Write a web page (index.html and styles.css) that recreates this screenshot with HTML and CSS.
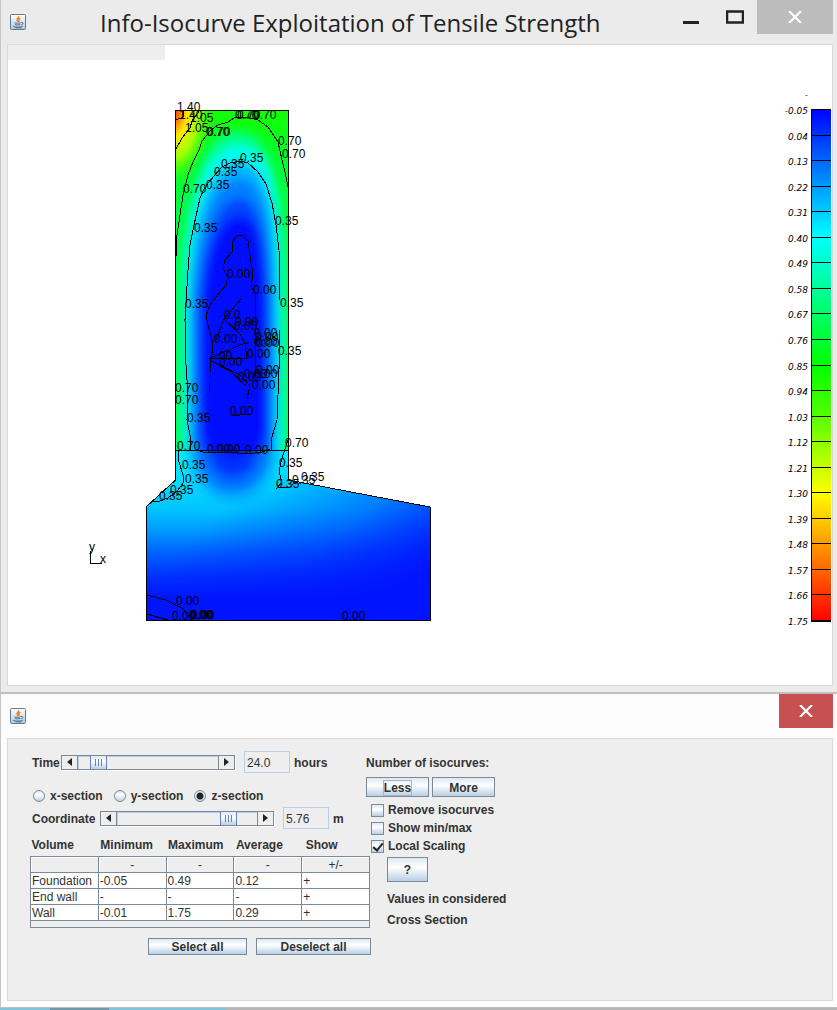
FILE: index.html
```html
<!DOCTYPE html>
<html lang="en">

<head>
    <meta charset="UTF-8">
    <meta name="viewport" content="width=device-width, initial-scale=1.0">
    <title>Info-Isocurve Exploitation of Tensile Strength</title>
    <link rel="stylesheet" href="styles.css">
</head>

<body>
    <svg class="defs" width="0" height="0" aria-hidden="true">
        <defs>
            <linearGradient id="cup-bg" x1="0" y1="0" x2="0" y2="1">
                <stop offset="0" stop-color="#fff" />
                <stop offset="1" stop-color="#b4c8d8" />
            </linearGradient>
            <symbol id="java" viewBox="0 0 16 16">
                <rect x="0.5" y="0.5" width="15" height="15" rx="1" fill="url(#cup-bg)" stroke="#64798a" />
                <path d="M8.6 2.2c.8 1.7-2.500 2.300-1.500 4.200.3.600.7.900.7 1.500M10.300 4.200c-1.800.7-2 1.500-1.300 2.300.4.500.1 1-.4 1.400" fill="none" stroke="#ee7d1d" stroke-width="1.400" />
                <path d="M4.500 8.800c1.500.6 4.800.6 6.200 0M5 10.500c1.300.5 3.800.5 5.200 0M3.200 12.300c2 1.100 7.400 1.100 9.400 0M5.500 13.800h6M11 8.600c2.800-.5 2.600 1.800.2 2.300" fill="none" stroke="#46708f" stroke-width="1" />
            </symbol>
        </defs>
    </svg>

    <!-- Plot window -->
    <section class="window plot-window">
        <header class="titlebar">
            <svg class="app-icon"><use href="#java" /></svg>
            <h1>Info-Isocurve Exploitation of Tensile Strength</h1>
            <div class="window-buttons">
                <button class="win-btn" aria-label="Minimize"><svg width="18" height="14"><path d="M1 12.500h16" stroke="#222" stroke-width="3" /></svg></button>
                <button class="win-btn" aria-label="Maximize"><svg width="18" height="14"><path d="M1 1.500h16v11H1z" fill="none" stroke="#222" stroke-width="2.500" /></svg></button>
                <button class="win-btn close inactive" aria-label="Close"><svg width="14" height="12"><path d="M1 0l12 12M13 0L1 12" stroke="#fff" stroke-width="2.200" /></svg></button>
            </div>
        </header>
        <main class="canvas">
            <div class="menu-strip"></div>
            <div class="plot">
                <svg class="section" width="440" height="625" viewBox="8 60 440 625">
                    <defs>
                        <linearGradient id="wall" x1="0" y1="0" x2="0" y2="1">
                            <stop offset="0" stop-color="#14ff00" />
                            <stop offset="0.150" stop-color="#00ff30" />
                            <stop offset="0.500" stop-color="#00ff50" />
                            <stop offset="1" stop-color="#00ff60" />
                        </linearGradient>
                        <radialGradient id="corner" gradientUnits="userSpaceOnUse" cx="0" cy="0" r="1" gradientTransform="translate(174 112) scale(40 75)">
                            <stop offset="0" stop-color="#ff3000" />
                            <stop offset="0.150" stop-color="#ff8000" />
                            <stop offset="0.320" stop-color="#ffe800" />
                            <stop offset="0.600" stop-color="#a0ff00" />
                            <stop offset="1" stop-color="#20ff00" stop-opacity="0" />
                        </radialGradient>
                        <linearGradient id="base" x1="0" y1="0" x2="0" y2="1">
                            <stop offset="0" stop-color="#00f0ff" />
                            <stop offset="0.200" stop-color="#00dcff" />
                            <stop offset="0.350" stop-color="#00c4ff" />
                            <stop offset="0.470" stop-color="#009cff" />
                            <stop offset="0.600" stop-color="#0064ff" />
                            <stop offset="0.750" stop-color="#0030ff" />
                            <stop offset="0.880" stop-color="#0014ff" />
                            <stop offset="1" stop-color="#0014ff" />
                        </linearGradient>
                        <linearGradient id="base-right" gradientUnits="userSpaceOnUse" x1="270" y1="470" x2="390" y2="610">
                            <stop offset="0" stop-color="#0014ff" stop-opacity="0" />
                            <stop offset="0.500" stop-color="#0014ff" stop-opacity="0.400" />
                            <stop offset="1" stop-color="#0014ff" />
                        </linearGradient>
                        <radialGradient id="joint" gradientUnits="userSpaceOnUse" cx="0" cy="0" r="1" gradientTransform="translate(233 448) scale(54 64)">
                            <stop offset="0" stop-color="#0014ff" />
                            <stop offset="0.350" stop-color="#0038ff" />
                            <stop offset="0.650" stop-color="#0078ff" stop-opacity="0.850" />
                            <stop offset="1" stop-color="#00c0ff" stop-opacity="0" />
                        </radialGradient>
                        <filter id="soft" x="-30%" y="-30%" width="160%" height="160%">
                            <feGaussianBlur stdDeviation="5" />
                        </filter>
                        <clipPath id="wall-clip"><path d="M176 110H288V450H176z" /></clipPath>
                    </defs>

                    <path d="M176 450H288V480L430 507V620H146V507L176 480z" fill="url(#base)" />
                    <path d="M176 450H288V480L430 507V620H146V507L176 480z" fill="url(#base-right)" />
                    <path d="M176 450H288V520H176z" fill="url(#joint)" />
                    <g clip-path="url(#wall-clip)">
                        <path d="M176 110H288V450H176z" fill="url(#wall)" />
                        <path d="M176 110H250V240H176z" fill="url(#corner)" />
                        <g filter="url(#soft)">
                            <path d="M182 480V290C183 210 198 132 238 132S283 210 284 290V480z" fill="#00ff90" />
                            <path d="M184 480V300C185 220 200 146 239 146S281 220 282 300V480z" fill="#00fff0" />
                            <path d="M188 480V310C189 235 204 162 239 162S277 235 278 310V480z" fill="#00b4ff" />
                            <path d="M192 480V315C193 250 208 178 239 178S272 250 273 315V480z" fill="#0080ff" />
                            <path d="M197 440V320C198 260 213 198 239 198S269 260 270 320V440L258 480H208z" fill="#0044ff" />
                            <path d="M201 430V315C203 270 215 216 240 216S265 270 266 315V430L252 480H214z" fill="#0010ff" />
                        </g>
                    </g>

                    <g class="curves">
                        <path d="M175.500 110.500H288V480L430 507V620H146V507L175.500 480zM176 450H288" />
                        <path d="M176 120L183 117V111M176 149L182 138L190 128L192 121L200 110" />
                        <path d="M176 256L177 235L180 215L183 195L188 175L193 162L199 150L202 141L210 131L218 125L228 122L234 118L245 117L258 120L268 127L278 142L282 160L285 172L288 187" />
                        <path d="M191 450L190 435L187 420L188 395L186 365L185 320L188 270L190 245L194 225L200 198L205 187L214 176L222 167L230 163L240 161L248 163L258 172L266 184L272 203L276 225L279 250L280 300V330L279 370L277 420L272 437L271 450" />
                        <path d="M255 380V292L251 287L253 275L250 255L248 241L242 235L237 236L232 242V252L225 260L223 268L228 278L226 285L216 297L210 305L206 315L208 325L212 340L213 352L210 362V372M209 383V391" />
                        <path d="M242 298L224 319L216 340M224 319L240 334L245 343L247 358H210L245 343M210 360L240 375L250 386L247 399M215 363L230 371L246 386M231 416L250 414M249 342L246 344" />
                        <path d="M197 450L206 453L225 452L248 454L262 452L270 449M178 450L179 462L183 475L184 482L178 490L168 498L160 501L152 502M288 440L284 452L281 462L279 472L282 482L277 488L290 487L296 481" />
                        <path d="M147 595L166 600L182 608L190 617M147 614L168 620M90 551V563H102" />
                    </g>

                    <g class="values">
                        <text x="177" y="111">1.40</text>
                        <text x="179" y="119">1.40</text>
                        <text x="190" y="122">1.05</text>
                        <text x="185" y="132">1.05</text>
                        <text x="235" y="119">0.70</text>
                        <text x="237" y="119">0.70</text>
                        <text x="253" y="119">0.70</text>
                        <text x="206" y="136">0.70</text>
                        <text x="207" y="136">0.70</text>
                        <text x="278" y="145">0.70</text>
                        <text x="282" y="158">0.70</text>
                        <text x="240" y="162">0.35</text>
                        <text x="221" y="168">0.35</text>
                        <text x="214" y="176">0.35</text>
                        <text x="206" y="189">0.35</text>
                        <text x="183" y="193">0.70</text>
                        <text x="275" y="225">0.35</text>
                        <text x="194" y="232">0.35</text>
                        <text x="227" y="278">0.00</text>
                        <text x="253" y="294">0.00</text>
                        <text x="185" y="308">0.35</text>
                        <text x="280" y="307">0.35</text>
                        <text x="224" y="319">0.0</text>
                        <text x="235" y="326">0.00</text>
                        <text x="234" y="330">0.00</text>
                        <text x="254" y="337">0.00</text>
                        <text x="255" y="341">0.00</text>
                        <text x="254" y="346">0.00</text>
                        <text x="256" y="347">0.00</text>
                        <text x="214" y="343">0.00</text>
                        <text x="247" y="358">0.00</text>
                        <text x="278" y="355">0.35</text>
                        <text x="219" y="360">00</text>
                        <text x="219" y="366">0.00</text>
                        <text x="256" y="374">0.00</text>
                        <text x="254" y="378">0.00</text>
                        <text x="238" y="381">0.00</text>
                        <text x="244" y="378">0.00</text>
                        <text x="252" y="389">0.00</text>
                        <text x="175" y="392">0.70</text>
                        <text x="175" y="404">0.70</text>
                        <text x="230" y="415">0.00</text>
                        <text x="187" y="422">0.35</text>
                        <text x="177" y="450">0.70</text>
                        <text x="207" y="453">0.00</text>
                        <text x="217" y="453">0.00</text>
                        <text x="245" y="454">0.00</text>
                        <text x="285" y="447">0.70</text>
                        <text x="182" y="469">0.35</text>
                        <text x="279" y="467">0.35</text>
                        <text x="185" y="483">0.35</text>
                        <text x="170" y="494">0.35</text>
                        <text x="159" y="500">0.35</text>
                        <text x="276" y="488">0.35</text>
                        <text x="292" y="484">0.35</text>
                        <text x="301" y="481">0.35</text>
                        <text x="176" y="605">0.00</text>
                        <text x="172" y="620">0.00</text>
                        <text x="189" y="619">0.00</text>
                        <text x="190" y="619">0.00</text>
                        <text x="191" y="619">0.00</text>
                        <text x="342" y="620">0.00</text>
                        <text x="89" y="551">y</text>
                        <text x="100" y="563">x</text>
                    </g>
                </svg>

                <svg class="legend" width="56" height="625" viewBox="776 60 56 625">
                    <defs>
                        <linearGradient id="scale" x1="0" y1="0" x2="0" y2="1">
                            <stop offset="0" stop-color="#00f" />
                            <stop offset="0.250" stop-color="#0ff" />
                            <stop offset="0.500" stop-color="#0f0" />
                            <stop offset="0.600" stop-color="#5f0" />
                            <stop offset="0.750" stop-color="#ff0" />
                            <stop offset="1" stop-color="#f00" />
                        </linearGradient>
                    </defs>
                    <rect x="811" y="109" width="20" height="512" fill="url(#scale)" />
                    <path class="ticks" d="M811 109V622M811 109h20M811 135h20M811 160h20M811 186h20M811 211h20M811 237h20M811 262h20M811 288h20M811 313h20M811 339h20M811 365h20M811 390h20M811 416h20M811 441h20M811 467h20M811 492h20M811 518h20M811 543h20M811 569h20M811 594h20M811 620h20M811 621h20" />
                    <g class="scale-labels">
                        <text x="808" y="98">-</text>
                        <text x="808" y="114">-0.05</text>
                        <text x="808" y="140">0.04</text>
                        <text x="808" y="165">0.13</text>
                        <text x="808" y="191">0.22</text>
                        <text x="808" y="216">0.31</text>
                        <text x="808" y="242">0.40</text>
                        <text x="808" y="267">0.49</text>
                        <text x="808" y="293">0.58</text>
                        <text x="808" y="318">0.67</text>
                        <text x="808" y="344">0.76</text>
                        <text x="808" y="370">0.85</text>
                        <text x="808" y="395">0.94</text>
                        <text x="808" y="421">1.03</text>
                        <text x="808" y="446">1.12</text>
                        <text x="808" y="472">1.21</text>
                        <text x="808" y="497">1.30</text>
                        <text x="808" y="523">1.39</text>
                        <text x="808" y="548">1.48</text>
                        <text x="808" y="574">1.57</text>
                        <text x="808" y="599">1.66</text>
                        <text x="808" y="625">1.75</text>
                    </g>
                </svg>
            </div>
        </main>
    </section>

    <!-- Control window -->
    <section class="window control-window">
        <header class="titlebar">
            <svg class="app-icon"><use href="#java" /></svg>
            <div class="window-buttons">
                <button class="win-btn close" aria-label="Close"><svg width="14" height="12"><path d="M1 0l12 12M13 0L1 12" stroke="#fff" stroke-width="2.200" /></svg></button>
            </div>
        </header>
        <form class="panel">
            <div class="left">
                <div class="row">
                    <label class="time-label" for="time">Time</label>
                    <div class="scrollbar">
                        <button type="button" class="prev" aria-label="Earlier"></button>
                        <input type="range" id="time" min="0" max="240" value="23">
                        <button type="button" class="next" aria-label="Later"></button>
                    </div>
                    <input type="text" class="field" id="hours" value="24.0">
                    <label for="hours">hours</label>
                </div>
                <div class="row sections">
                    <label><input type="radio" name="section">x-section</label>
                    <label><input type="radio" name="section">y-section</label>
                    <label><input type="radio" name="section" checked>z-section</label>
                </div>
                <div class="row">
                    <label class="coord-label" for="coord">Coordinate</label>
                    <div class="scrollbar">
                        <button type="button" class="prev" aria-label="Decrease"></button>
                        <input type="range" id="coord" min="0" max="100" value="84">
                        <button type="button" class="next" aria-label="Increase"></button>
                    </div>
                    <input type="text" class="field" id="metres" value="5.76">
                    <label for="metres">m</label>
                </div>
                <table>
                    <thead>
                        <tr class="names">
                            <th>Volume</th>
                            <th>Minimum</th>
                            <th>Maximum</th>
                            <th>Average</th>
                            <th>Show</th>
                        </tr>
                        <tr class="units">
                            <td></td>
                            <td>-</td>
                            <td>-</td>
                            <td>-</td>
                            <td>+/-</td>
                        </tr>
                    </thead>
                    <tbody>
                        <tr>
                            <td>Foundation</td>
                            <td>-0.05</td>
                            <td>0.49</td>
                            <td>0.12</td>
                            <td>+</td>
                        </tr>
                        <tr>
                            <td>End wall</td>
                            <td>-</td>
                            <td>-</td>
                            <td>-</td>
                            <td>+</td>
                        </tr>
                        <tr>
                            <td>Wall</td>
                            <td>-0.01</td>
                            <td>1.75</td>
                            <td>0.29</td>
                            <td>+</td>
                        </tr>
                    </tbody>
                    <tfoot>
                        <tr>
                            <td colspan="5"></td>
                        </tr>
                    </tfoot>
                </table>
                <div class="select-buttons">
                    <button type="button" class="btn">Select all</button>
                    <button type="button" class="btn wide">Deselect all</button>
                </div>
            </div>

            <div class="right">
                <div class="heading">Number of isocurves:</div>
                <div class="count-buttons">
                    <button type="button" class="btn"><span class="focus">Less</span></button>
                    <button type="button" class="btn">More</button>
                </div>
                <div class="checks">
                    <label><input type="checkbox">Remove isocurves</label>
                    <label><input type="checkbox">Show min/max</label>
                    <label><input type="checkbox" checked>Local Scaling</label>
                </div>
                <button type="button" class="btn help">?</button>
                <p>Values in considered<br>Cross Section</p>
            </div>
        </form>
    </section>
    <div class="taskbar"></div>
</body>

</html>
```
FILE: styles.css
```css
* {
    box-sizing: border-box;
}

body {
    margin: 0;
    background: #ebebeb;
    color: #333;
    font: 12px "Liberation Sans", Arial, sans-serif;
}

button,
input {
    margin: 0;
    padding: 0;
    font: inherit;
    color: inherit;
}

.defs {
    display: block;
}

/* windows */
.window {
    padding: 0 4px 6px 6px;
    border-left: 1px solid #c6c6c6;
}

.plot-window {
    background: #ebebeb;
}

.control-window {
    background: #fcfcfc;
    border-top: 2px solid #bfbfbf;
    border-bottom: 1px solid #bfbfbf;
}

.titlebar {
    display: flex;
    align-items: center;
    height: 44px;
    padding-left: 3px;
}

.app-icon {
    width: 16px;
    height: 16px;
}

.titlebar h1 {
    margin: 0 0 0 74px;
    padding-top: 2px;
    font: 24px/32px "Open Sans", "Noto Sans", sans-serif;
    color: #222;
    white-space: nowrap;
}

.window-buttons {
    display: flex;
    align-self: flex-start;
    margin-left: auto;
}

.win-btn {
    display: flex;
    align-items: center;
    justify-content: center;
    width: 44px;
    height: 34px;
    border: 0;
    background: none;
}

.win-btn.close {
    width: 54px;
    background: #c75050;
}

.win-btn.inactive {
    width: 76px;
    background: #bcbcbc;
}

/* plot */
.canvas {
    background: #fff;
    border: 1px solid #d8d8d8;
}

.menu-strip {
    width: 157px;
    height: 15px;
    background: #eee;
}

.plot {
    display: flex;
    justify-content: space-between;
}

.plot svg {
    display: block;
}

.curves {
    fill: none;
    stroke: #000;
    stroke-width: 1;
    shape-rendering: crispEdges;
}

.values {
    font-size: 12px;
    fill: #000;
}

.ticks {
    fill: none;
    stroke: #000;
    shape-rendering: crispEdges;
}

.scale-labels {
    font: italic 9px "DejaVu Sans", Verdana, sans-serif;
    text-anchor: end;
    fill: #000;
}

/* controls */
.panel {
    display: flex;
    padding: 12px 22px 45px;
    background: #eee;
    border: 1px solid #d8d8d8;
    font-weight: bold;
}

.left {
    flex: 0 0 336px;
    min-width: 0;
}

.row {
    display: flex;
    align-items: center;
    height: 22px;
}

.row label {
    flex: none;
    padding-top: 1px;
    white-space: nowrap;
}

.time-label {
    width: 31px;
    padding-left: 2px;
}

.coord-label {
    width: 70px;
    padding-left: 2px;
}

.scrollbar {
    display: flex;
    flex: none;
    width: 174px;
    height: 15px;
    border: 1px solid #7a8a99;
    box-shadow: 1px 1px #fff;
}

.scrollbar button {
    display: flex;
    align-items: center;
    justify-content: center;
    width: 15px;
    border: 0;
    background: #eee;
}

.scrollbar button::before {
    content: "";
    border: 4px solid transparent;
}

.scrollbar .prev::before {
    border-width: 4px 5px 4px 0;
    border-right-color: #222;
}

.scrollbar .next::before {
    border-width: 4px 0 4px 5px;
    border-left-color: #222;
}

input[type="range"] {
    flex: 1;
    min-width: 0;
    height: 13px;
    appearance: none;
    background: #eee;
    border: solid #7a8a99;
    border-width: 0 1px;
    box-shadow: inset 1px 1px #b8cfe5;
}

input[type="range"]::-webkit-slider-thumb {
    appearance: none;
    width: 17px;
    height: 13px;
    border: solid #6382bf;
    border-width: 0 1px;
    background:
        linear-gradient(#6382bf, #6382bf) 4px 3px / 1px 7px no-repeat,
        linear-gradient(#6382bf, #6382bf) 7px 3px / 1px 7px no-repeat,
        linear-gradient(#6382bf, #6382bf) 10px 3px / 1px 7px no-repeat,
        linear-gradient(#dde8f3, #fff 40%, #b8cfe5);
}

.field {
    flex: none;
    width: 46px;
    height: 22px;
    margin: 0 4px 0 9px;
    padding: 1px 2px 0;
    border: 1px solid #b8cfe5;
    background: #eee;
    font-weight: normal;
}

.sections {
    height: 16px;
    margin: 15px 0 3px;
    padding-left: 3px;
    gap: 11px;
}

.sections label,
.checks label {
    display: flex;
    align-items: center;
    gap: 5px;
}

.sections label {
    padding: 0;
}

input[type="radio"],
input[type="checkbox"] {
    appearance: none;
    width: 12px;
    height: 12px;
    border: 1px solid #7a8a99;
    background: linear-gradient(#dde8f3, #fff 40%, #b8cfe5);
}

input[type="radio"] {
    border-radius: 50%;
}

input[type="radio"]:checked {
    background:
        radial-gradient(circle, #222 0 3px, transparent 4px),
        linear-gradient(#dde8f3, #fff 40%, #b8cfe5);
}

table {
    width: 340px;
    margin-top: 8px;
    border-collapse: collapse;
    table-layout: fixed;
    font-weight: normal;
}

th {
    height: 19px;
    padding: 0 0 3px 1px;
    text-align: left;
}

th + th {
    padding-left: 2px;
}

th:last-child {
    padding-left: 4px;
}

td {
    height: 16px;
    padding: 1px 1px 0;
    border: 1px solid #7a8a99;
    background: #fff;
    line-height: 14px;
    white-space: nowrap;
}

.units td {
    background: #eee;
    text-align: center;
    box-shadow: inset 1px 1px #fff;
}

tfoot td {
    height: 7px;
    background: #eee;
}

.btn {
    height: 20px;
    padding-top: 1px;
    border: 1px solid #7a8a99;
    background: linear-gradient(#dde8f3, #fff 40%, #b8cfe5);
    font-weight: bold;
    line-height: 14px;
}

.select-buttons {
    display: flex;
    gap: 9px;
    margin: 10px 0 0 118px;
}

.select-buttons .btn {
    flex: 0 0 99px;
    height: 17px;
}

.select-buttons .wide {
    flex-basis: 115px;
}

.heading {
    padding-top: 1px;
    line-height: 22px;
}

.count-buttons {
    display: flex;
    gap: 3px;
    margin: 3px 0 4px;
}

.count-buttons .btn {
    width: 63px;
}

.focus {
    outline: 1px solid #a3b8cc;
}

.checks {
    padding-left: 5px;
}

.checks label {
    height: 18px;
    gap: 4px;
}

input[type="checkbox"] {
    width: 13px;
    height: 13px;
}

input[type="checkbox"]:checked::before {
    content: "";
    display: block;
    width: 8px;
    height: 4px;
    margin: 2px 1px;
    border: solid #222;
    border-width: 0 0 2px 2px;
    transform: rotate(-50deg);
}

.help {
    width: 41px;
    height: 25px;
    margin: 2px 0 0 21px;
}

.right p {
    margin: 7px 0 0 21px;
    line-height: 21px;
}

.taskbar {
    height: 2px;
    background: linear-gradient(90deg, #7fc4d8 6%, #6f98a8 6% 13%, #7fc4d8 13% 27%, #b4b4b4 27%);
}
```
